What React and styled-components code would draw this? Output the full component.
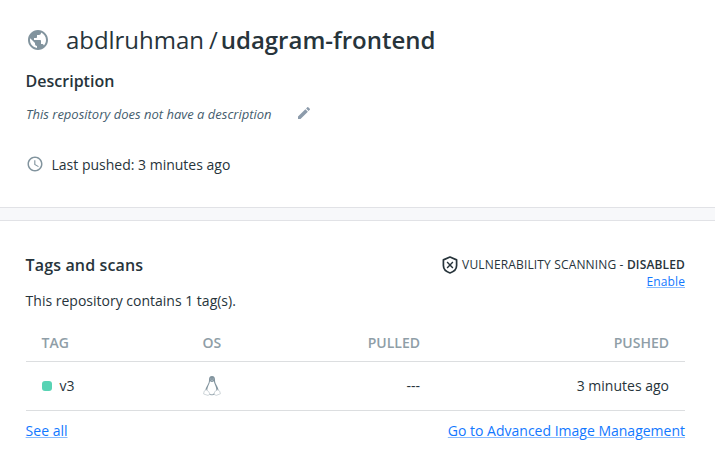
import React from 'react';
import styled, { createGlobalStyle } from 'styled-components';
import { MdPublic, MdEdit, MdAccessTime } from 'react-icons/md';

const GlobalStyle = createGlobalStyle`
  * { box-sizing: border-box; }
  body {
    margin: 0;
    background: #fff;
    color: #27343b;
    font: 400 14px/20px "Open Sans", sans-serif;
  }
`;

const Page = styled.main`
  width: 715px;
  height: 468px;
  overflow: hidden;
`;

const Summary = styled.section`
  height: 208px;
  padding: 22px 26px 0;
  border-bottom: 1px solid #e1e2e6;
`;

const Divider = styled.div`
  height: 12px;
  background: #f7f8fa;
`;

const Title = styled.h1`
  display: flex;
  align-items: center;
  height: 36px;
  margin: 0;
  font-size: 24px;
  font-weight: 400;
  line-height: 36px;
  white-space: pre;
  svg { width: 24px; height: 24px; color: #82949e; margin-right: 16px; }
`;

const Owner = styled.span`
  font-weight: 400;
  letter-spacing: -0.04px;
`;

const Slash = styled.span`
  margin: 0 4px 0 5px;
`;

const RepoName = styled.strong`
  font-weight: 600;
  margin-left: -1px;
`;

const Heading = styled.h2`
  margin: 0;
  font-size: 16px;
  line-height: 24px;
  font-weight: 600;
`;

const SummaryHeading = styled(Heading)`
  margin-top: 11px;
  margin-left: -0.4px;
`;

const TagsHeading = styled(Heading)`
  margin-left: -0.4px;
  letter-spacing: 0.14px;
`;

const Description = styled.div`
  display: flex;
  align-items: center;
  gap: 24px;
  height: 20px;
  margin-top: 11px;
  color: #445d6e;
  font-size: 13px;
  font-style: italic;
  svg { width: 16px; height: 16px; color: #8c9bab; margin-top: -2px; }
`;

const LastPushed = styled.div`
  display: flex;
  align-items: center;
  gap: 8px;
  margin-top: 31px;
  margin-left: -0.5px;
  svg { width: 18px; height: 18px; color: #82949e; margin-top: -2px; }
`;

const Tags = styled.section`
  border-top: 1px solid #e1e2e6;
  padding: 32px 30px 0 26px;
`;

const TagsHeader = styled.header`
  display: flex;
  justify-content: space-between;
  height: 37px;
`;

const Scanning = styled.div`
  display: flex;
  flex-direction: column;
  align-items: flex-end;
  padding-top: 3px;
  font-size: 12px;
  line-height: 18px;
`;

const ScanStatus = styled.div`
  display: flex;
  align-items: center;
  gap: 4px;
  letter-spacing: 0.15px;
  white-space: pre;
  strong { font-weight: 600; }
`;

const Link = styled.a`
  color: #1278ff;
  font-size: ${(p) => (p.$small ? '12px' : '14px')};
  line-height: ${(p) => (p.$small ? '16px' : '18px')};
  letter-spacing: ${(p) => (p.$small ? '0.1px' : '0')};
  text-decoration: underline;
  text-decoration-color: #88bbff;
  text-decoration-thickness: 1px;
  text-underline-offset: 1px;
`;

const Row = styled.div`
  display: grid;
  grid-template-columns: 161px 78px 139.4px 1fr;
  align-items: center;
  height: ${(p) => (p.$head ? '37px' : '49px')};
  padding: 0 16px 0 15.6px;
  border-bottom: 1px solid #dcdee0;
  color: ${(p) => (p.$head ? '#8f9ea7' : 'inherit')};
  font-weight: ${(p) => (p.$head ? 600 : 400)};
`;

const Cell = styled.div`
  display: flex;
  align-items: center;
  justify-content: ${(p) => (p.$end ? 'flex-end' : 'flex-start')};
`;

const Count = styled.p`
  margin: 1px 0 14px -0.4px;
`;

const Dot = styled.i`
  width: 10px;
  height: 10px;
  margin-right: 8px;
  border-radius: 3px;
  background: #58d3b4;
`;

const Footer = styled.footer`
  display: flex;
  justify-content: space-between;
  margin: 11px 0 0 -0.4px;
`;

function ShieldIcon() {
  return (
    <svg width="16" height="18" viewBox="0 0 16 18" fill="none" stroke="#27343b">
      <path d="M8 1 14.6 3.9V9.6C14.6 13 11.8 15.8 8 17 4.2 15.8 1.4 13 1.4 9.6V3.9Z" strokeWidth="1.7" strokeLinejoin="round" />
      <path d="m5.1 6.1 5.8 5.8m0-5.8-5.8 5.8" strokeWidth="1.4" />
    </svg>
  );
}

function LinuxIcon() {
  return (
    <svg width="18" height="20" viewBox="0 0 18 20">
      <path d="M9 0C6.8 0 6 1.5 6 3.8c0 1.8-.2 3-1.2 4.8C3.6 10.8 2.2 13 2.4 15.5c1 3.4 11.4 3.4 13.2 0 .2-2.5-1.1-4.9-2.4-7.1-1-1.7-1.2-2.8-1.2-4.6C12 1.3 11.2 0 9 0Z" fill="#82949e" />
      <path d="M7 5.3C8.2 6.1 9.8 6.1 10.8 5.3c.3 2.3 2.3 4.8 2.5 7.8.4 6.6-8.9 6.6-9.1 1.2C4.1 11.2 6.8 8 7 5.3Z" fill="#fff" />
      <path d="M3.2 13.7 1.2 15.1.6 18 5 19.4 7 18.2 5.6 15.5ZM14.8 13.7l1.9 1.5.7 2.6-4.2 1.6-2.2-1.1.8-2.8Z" fill="#fff" stroke="#c3ccd1" strokeWidth=".8" strokeLinejoin="round" />
      <path d="M6.8 18.5Q9 19.2 11.2 18.4" stroke="#82949e" strokeWidth=".8" fill="none" />
      <path d="M7.2 3h1.2m1.2 0h1.2M7.9 4.4h2.2" stroke="#c8d1d6" strokeWidth=".6" />
    </svg>
  );
}

export default function App() {
  return (
    <Page>
      <GlobalStyle />
      <Summary>
        <Title>
          <MdPublic />
          <Owner>abdlruhman</Owner>
          <Slash>/</Slash>
          <RepoName>udagram-frontend</RepoName>
        </Title>
        <SummaryHeading>Description</SummaryHeading>
        <Description>
          <span>This repository does not have a description</span>
          <MdEdit />
        </Description>
        <LastPushed>
          <MdAccessTime />
          <span>Last pushed: 3 minutes ago</span>
        </LastPushed>
      </Summary>
      <Divider />
      <Tags>
        <TagsHeader>
          <TagsHeading>Tags and scans</TagsHeading>
          <Scanning>
            <ScanStatus>
              <ShieldIcon />
              <span>VULNERABILITY SCANNING - <strong>DISABLED</strong></span>
            </ScanStatus>
            <Link $small>Enable</Link>
          </Scanning>
        </TagsHeader>
        <Count>This repository contains 1 tag(s).</Count>
        <Row $head>
          <Cell>TAG</Cell>
          <Cell>OS</Cell>
          <Cell $end>PULLED</Cell>
          <Cell $end>PUSHED</Cell>
        </Row>
        <Row>
          <Cell><Dot />v3</Cell>
          <Cell><LinuxIcon /></Cell>
          <Cell $end>---</Cell>
          <Cell $end>3 minutes ago</Cell>
        </Row>
        <Footer>
          <Link>See all</Link>
          <Link>Go to Advanced Image Management</Link>
        </Footer>
      </Tags>
    </Page>
  );
}
